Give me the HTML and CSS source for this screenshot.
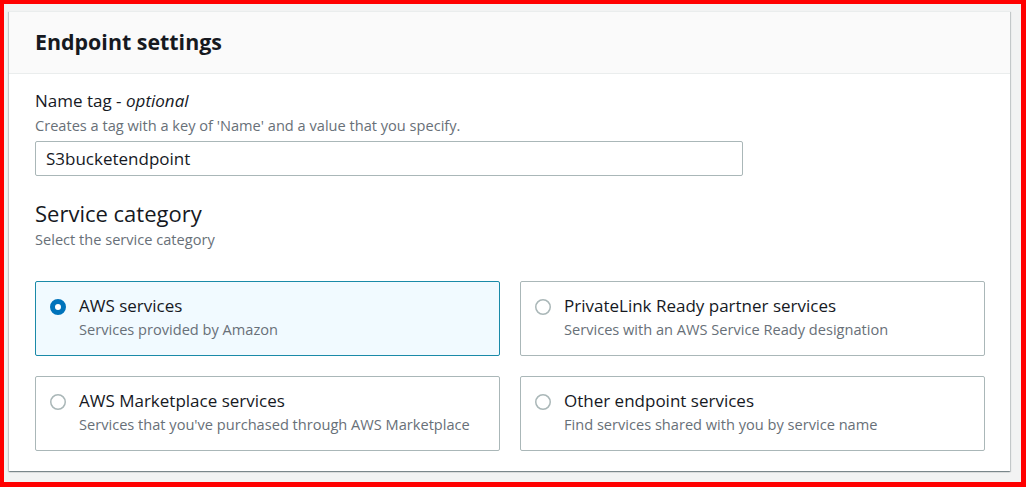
FILE: index.html
```html
<!DOCTYPE html>
<html lang="en">
<head>
<meta charset="utf-8">
<title>Endpoint settings</title>
<link rel="stylesheet" href="styles.css">
</head>
<body>
<div class="frame">
  <section class="card">
    <header class="card-header">
      <h2 class="card-title">Endpoint settings</h2>
    </header>
    <div class="card-body">
      <div class="field">
        <label class="field-label" for="nametag">Name tag - <i>optional</i></label>
        <div class="field-desc">Creates a tag with a key of 'Name' and a value that you specify.</div>
        <input class="text-input" id="nametag" type="text" value="S3bucketendpoint">
      </div>
      <div class="section">
        <h3 class="section-title">Service category</h3>
        <div class="field-desc">Select the service category</div>
      </div>
      <div class="tiles">
        <div class="tile selected">
          <svg class="radio" viewBox="0 0 16 16" width="16" height="16"><circle cx="8" cy="8" r="5.5" fill="#fff" stroke="#0073bb" stroke-width="5"/></svg>
          <div class="tile-text">
            <div class="tile-label">AWS services</div>
            <div class="tile-desc">Services provided by Amazon</div>
          </div>
        </div>
        <div class="tile">
          <svg class="radio" viewBox="0 0 16 16" width="16" height="16"><circle cx="8" cy="8" r="7.25" fill="#fff" stroke="#aab7b8" stroke-width="1.5"/></svg>
          <div class="tile-text">
            <div class="tile-label">PrivateLink Ready partner services</div>
            <div class="tile-desc">Services with an AWS Service Ready designation</div>
          </div>
        </div>
        <div class="tile">
          <svg class="radio" viewBox="0 0 16 16" width="16" height="16"><circle cx="8" cy="8" r="7.25" fill="#fff" stroke="#aab7b8" stroke-width="1.5"/></svg>
          <div class="tile-text">
            <div class="tile-label">AWS Marketplace services</div>
            <div class="tile-desc">Services that you've purchased through AWS Marketplace</div>
          </div>
        </div>
        <div class="tile">
          <svg class="radio" viewBox="0 0 16 16" width="16" height="16"><circle cx="8" cy="8" r="7.25" fill="#fff" stroke="#aab7b8" stroke-width="1.5"/></svg>
          <div class="tile-text">
            <div class="tile-label">Other endpoint services</div>
            <div class="tile-desc">Find services shared with you by service name</div>
          </div>
        </div>
      </div>
    </div>
  </section>
</div>
</body>
</html>
```

FILE: styles.css
```css
* { box-sizing: border-box; }
html, body { margin: 0; padding: 0; }
body {
  font-family: "Open Sans", "Noto Sans", "Liberation Sans", sans-serif;
  color: #16191f;
  width: 1026px;
  height: 487px;
  overflow: hidden;
}
.frame {
  width: 1026px;
  height: 487px;
  border-style: solid;
  border-color: #ff0000;
  border-width: 4px 5px 5px 4px;
  background: #f2f3f3;
  padding: 7px 11px 0 5px;
}
.card {
  background: #fff;
  border-top: 1px solid #eaeded;
  box-shadow: 0 1px 1px 0 rgba(0, 28, 36, 0.3), 1px 1px 1px 0 rgba(0, 28, 36, 0.15), -1px 1px 1px 0 rgba(0, 28, 36, 0.15);
  height: 460px;
}
.card-header {
  background: #fafafa;
  border-bottom: 1px solid #eaeded;
  height: 62px;
  padding: 0 24px 0 26px;
  display: flex;
  align-items: center;
}
.card-title {
  margin: 0 0 2px;
  font-size: 21.4px;
  font-weight: 700;
  line-height: 28px;
  color: #16191f;
}
.card-body {
  padding: 16px 24px 20px 26px;
}
.field-label {
  display: block;
  font-size: 17px;
  line-height: 22px;
  color: #16191f;
}
.field-label i { font-style: italic; }
.field-desc {
  font-size: 14.6px;
  line-height: 20px;
  color: #687078;
  margin-top: 3px;
}
.text-input {
  display: block;
  margin-top: 6px;
  width: 708px;
  height: 35px;
  border: 1px solid #aab7b8;
  border-radius: 2px;
  padding: 0 10px;
  font-family: inherit;
  font-size: 17px;
  color: #16191f;
  background: #fff;
}
.section { margin-top: 22px; }
.section-title {
  margin: 0;
  font-size: 22px;
  font-weight: 400;
  line-height: 30px;
  color: #16191f;
}
.section .field-desc { margin-top: 1px; }
.tiles {
  margin-top: 32px;
  display: grid;
  grid-template-columns: 465px 465px;
  column-gap: 20px;
  row-gap: 20px;
}
.tile {
  height: 75px;
  border: 1px solid #aab7b8;
  border-radius: 2px;
  background: #fff;
  padding: 13px 14px 0 14px;
  display: flex;
  align-items: flex-start;
  gap: 13px;
}
.tile.selected {
  border-color: #1a8aa8;
  background: #f1faff;
}
.radio {
  flex: none;
  margin-top: 4px;
}
.tile-label {
  font-size: 17px;
  line-height: 22px;
  color: #16191f;
}
.tile-desc {
  font-size: 14.6px;
  line-height: 20px;
  color: #687078;
  margin-top: 2px;
}
```
